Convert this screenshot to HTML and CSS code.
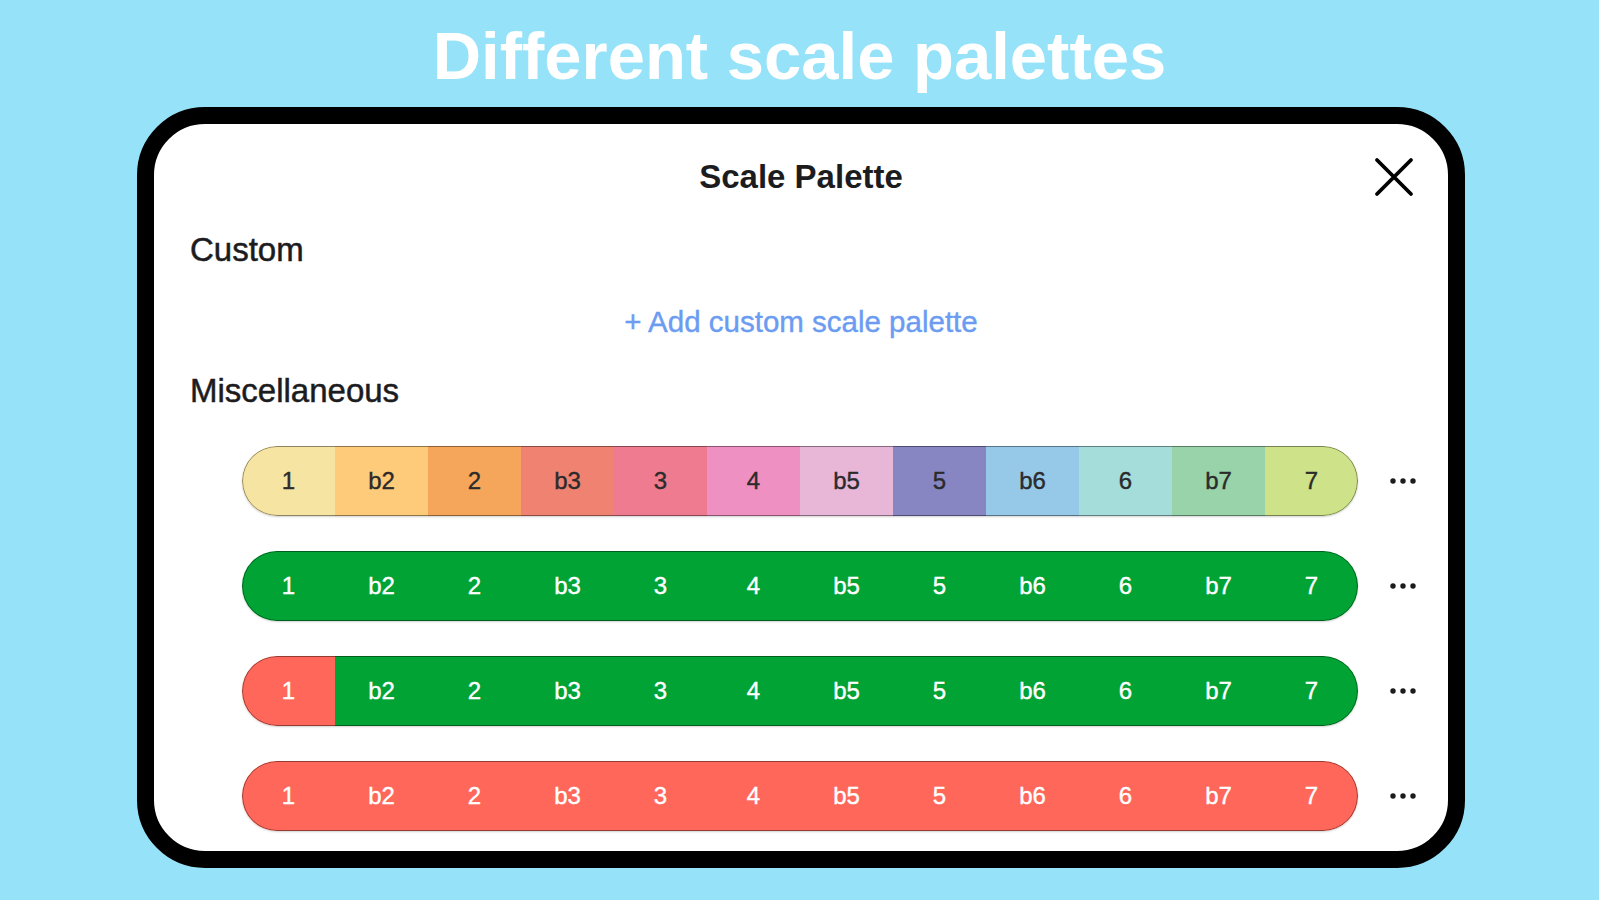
FILE: index.html
```html
<!DOCTYPE html>
<html lang="en">
<head>
<meta charset="utf-8">
<title>Different scale palettes</title>
<link rel="stylesheet" href="styles.css">
</head>
<body>
<h1 class="headline">Different scale palettes</h1>
<div class="device">
  <div class="sheet-header">
    <span class="spacer"></span>
    <h2 class="sheet-title">Scale Palette</h2>
    <button class="close" aria-label="Close">
      <svg width="42" height="42" viewBox="0 0 42 42"><path d="M4 4 L38 38 M38 4 L4 38" stroke="#000" stroke-width="3.8" stroke-linecap="round" fill="none"/></svg>
    </button>
  </div>
  <div class="section-label">Custom</div>
  <div class="add-link">+ Add custom scale palette</div>
  <div class="section-label misc">Miscellaneous</div>
  <div class="palette-list">
    <div class="palette-row">
      <div class="bar dark-text">
        <span class="seg c1">1</span><span class="seg c2">b2</span><span class="seg c3">2</span><span class="seg c4">b3</span><span class="seg c5">3</span><span class="seg c6">4</span><span class="seg c7">b5</span><span class="seg c8">5</span><span class="seg c9">b6</span><span class="seg c10">6</span><span class="seg c11">b7</span><span class="seg c12">7</span>
      </div>
      <div class="more"><svg width="26" height="8" viewBox="0 0 26 8"><circle cx="3" cy="4" r="2.7"/><circle cx="13" cy="4" r="2.7"/><circle cx="23" cy="4" r="2.7"/></svg></div>
    </div>
    <div class="palette-row">
      <div class="bar">
        <span class="seg green">1</span><span class="seg green">b2</span><span class="seg green">2</span><span class="seg green">b3</span><span class="seg green">3</span><span class="seg green">4</span><span class="seg green">b5</span><span class="seg green">5</span><span class="seg green">b6</span><span class="seg green">6</span><span class="seg green">b7</span><span class="seg green">7</span>
      </div>
      <div class="more"><svg width="26" height="8" viewBox="0 0 26 8"><circle cx="3" cy="4" r="2.7"/><circle cx="13" cy="4" r="2.7"/><circle cx="23" cy="4" r="2.7"/></svg></div>
    </div>
    <div class="palette-row">
      <div class="bar">
        <span class="seg red">1</span><span class="seg green">b2</span><span class="seg green">2</span><span class="seg green">b3</span><span class="seg green">3</span><span class="seg green">4</span><span class="seg green">b5</span><span class="seg green">5</span><span class="seg green">b6</span><span class="seg green">6</span><span class="seg green">b7</span><span class="seg green">7</span>
      </div>
      <div class="more"><svg width="26" height="8" viewBox="0 0 26 8"><circle cx="3" cy="4" r="2.7"/><circle cx="13" cy="4" r="2.7"/><circle cx="23" cy="4" r="2.7"/></svg></div>
    </div>
    <div class="palette-row">
      <div class="bar">
        <span class="seg red">1</span><span class="seg red">b2</span><span class="seg red">2</span><span class="seg red">b3</span><span class="seg red">3</span><span class="seg red">4</span><span class="seg red">b5</span><span class="seg red">5</span><span class="seg red">b6</span><span class="seg red">6</span><span class="seg red">b7</span><span class="seg red">7</span>
      </div>
      <div class="more"><svg width="26" height="8" viewBox="0 0 26 8"><circle cx="3" cy="4" r="2.7"/><circle cx="13" cy="4" r="2.7"/><circle cx="23" cy="4" r="2.7"/></svg></div>
    </div>
  </div>
</div>
</body>
</html>
```
FILE: styles.css
```css
* { box-sizing: border-box; }

html, body {
  margin: 0;
  padding: 0;
}

body {
  background: #96e3f9;
  font-family: "Liberation Sans", Arial, sans-serif;
  width: 1599px;
  height: 900px;
  overflow: hidden;
}

.headline {
  margin: 0;
  padding-top: 16px;
  height: 107px;
  line-height: 80px;
  font-size: 67px;
  font-weight: 700;
  color: #ffffff;
  text-align: center;
}

.device {
  margin-left: 137px;
  width: 1328px;
  height: 761px;
  border: 17px solid #000;
  border-radius: 68px;
  background: #fff;
  overflow: hidden;
}

.sheet-header {
  display: grid;
  grid-template-columns: 1fr auto 1fr;
  align-items: center;
  padding-top: 32px;
  height: 72px;
}

.sheet-title {
  margin: 0;
  font-size: 33px;
  line-height: 40px;
  font-weight: 700;
  color: #1c1c1e;
}

.close {
  justify-self: end;
  margin-right: 33px;
  width: 42px;
  height: 42px;
  padding: 0;
  border: 0;
  background: none;
  display: flex;
}

.section-label {
  margin-top: 34px;
  padding-left: 36px;
  font-size: 33px;
  line-height: 40px;
  color: #1c1c1e;
  -webkit-text-stroke: 0.5px #1c1c1e;
}

.section-label.misc {
  margin-top: 31px;
}

.add-link {
  margin-top: 34px;
  text-align: center;
  font-size: 29.5px;
  line-height: 36px;
  color: #6b9cf2;
  -webkit-text-stroke: 0.4px #6b9cf2;
}

.palette-list {
  margin-top: 35px;
  display: flex;
  flex-direction: column;
  gap: 35px;
}

.palette-row {
  display: flex;
  align-items: center;
  padding-left: 88px;
}

.bar {
  position: relative;
  display: flex;
  width: 1116px;
  height: 70px;
  border-radius: 35px;
  overflow: hidden;
  box-shadow: 0 1px 2px rgba(0, 0, 0, 0.18);
  color: #fff;
}

.bar::after {
  content: "";
  position: absolute;
  inset: 0;
  border-radius: 35px;
  border: 1.5px solid rgba(0, 0, 0, 0.42);
  pointer-events: none;
}

.bar.dark-text { color: #2b2b2b; }

.seg {
  flex: 0 0 93px;
  display: flex;
  align-items: center;
  justify-content: center;
  font-size: 24px;
  line-height: 70px;
  -webkit-text-stroke: 0.4px currentColor;
}

.c1 { background: #f6e4a2; }
.c2 { background: #fdcb79; }
.c3 { background: #f6a65a; }
.c4 { background: #f08272; }
.c5 { background: #ee7b8f; }
.c6 { background: #ee90c1; }
.c7 { background: #e8b7d7; }
.c8 { background: #8786c3; }
.c9 { background: #96c9e8; }
.c10 { background: #a4ddd9; }
.c11 { background: #98d3a9; }
.c12 { background: #cee389; }

.green { background: #00a334; }
.red { background: #ff675a; }

.more {
  width: 90px;
  display: flex;
  justify-content: center;
  align-items: center;
}

.more svg { fill: #1c1c1e; }
```
